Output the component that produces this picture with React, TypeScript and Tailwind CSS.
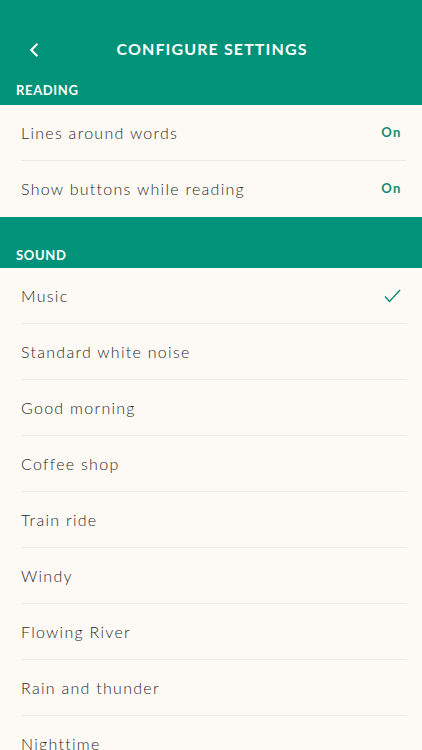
import { ChevronLeft } from "lucide-react";

const sounds = [
  "Music",
  "Standard white noise",
  "Good morning",
  "Coffee shop",
  "Train ride",
  "Windy",
  "Flowing River",
  "Rain and thunder",
  "Nighttime",
];

function Row({ label, right }: { label: string; right?: React.ReactNode }) {
  return (
    <div className="ml-[21px] mr-4 pr-[5px] h-14 flex items-center justify-between border-b border-[#ece9e4]">
      <span className="text-[16px] font-light tracking-[0.08em] text-[#2a2a2a]">{label}</span>
      {right}
    </div>
  );
}

function On() {
  return <span className="text-[13px] font-bold tracking-[0.12em] text-[#0f8c73] -mr-[1px]">On</span>;
}

export default function App() {
  return (
    <div className="w-[422px] h-[750px] overflow-hidden bg-[#fdfaf5]" style={{ fontFamily: "Lato, 'Open Sans', sans-serif" }}>
      <div className="bg-[#00937a] text-white">
        <div className="relative h-[74px] flex items-end justify-center pb-[13px]">
          <ChevronLeft className="absolute left-[23px] bottom-[13px]" size={22} strokeWidth={2.5} />
          <h1 className="text-[16px] font-bold tracking-[0.07em] ml-[2px]">CONFIGURE SETTINGS</h1>
        </div>
        <div className="h-[31px] px-4 flex items-start pt-[7px] text-[13px] font-bold tracking-[0.05em]">READING</div>
      </div>
      <div>
        <Row label="Lines around words" right={<On />} />
        <div className="ml-[21px] mr-4 pr-[5px] h-14 flex items-center justify-between">
          <span className="text-[16px] font-light tracking-[0.08em] text-[#2a2a2a]">Show buttons while reading</span>
          <On />
        </div>
      </div>
      <div className="bg-[#00937a] text-white h-[51px] px-4 flex items-end pb-[3px] text-[13px] font-bold tracking-[0.05em]">
        SOUND
      </div>
      <div>
        {sounds.map((s, i) => (
          <Row
            key={s}
            label={s}
            right={
              i === 0 ? (
                <svg width="17" height="14" viewBox="0 0 17 14">
                  <path d="M1 7.5 L5.5 12.5 L16 1" fill="none" stroke="#0f8c73" strokeWidth="1.4" />
                </svg>
              ) : undefined
            }
          />
        ))}
      </div>
    </div>
  );
}
